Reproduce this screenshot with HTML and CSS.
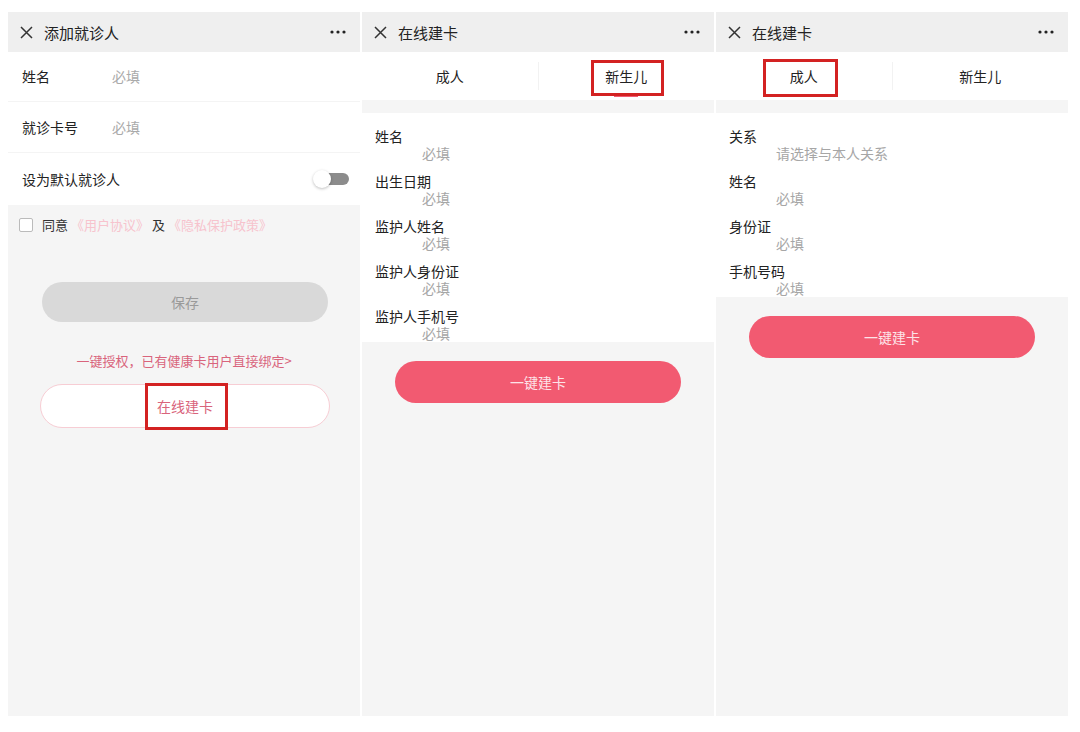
FILE: index.html
```html
<!DOCTYPE html>
<html lang="zh-CN">
<head>
    <meta charset="utf-8">
    <link rel="stylesheet" href="styles.css">
    <title>添加就诊人 / 在线建卡</title>
</head>
<body>
    <div class="screens">

        <!-- screen 1: add patient -->
        <div class="phone">
            <div class="nav">
                <svg class="close" width="13" height="13" viewBox="0 0 13 13"><path d="M1 1L12 12M12 1L1 12" stroke="#333" stroke-width="1.5"/></svg>
                <span class="nav-title">添加就诊人</span>
                <svg class="more" width="16" height="4" viewBox="0 0 16 4"><circle cx="2" cy="2" r="1.6" fill="#222"/><circle cx="8" cy="2" r="1.6" fill="#222"/><circle cx="14" cy="2" r="1.6" fill="#222"/></svg>
            </div>
            <div class="block">
                <div class="row">
                    <span class="row-label">姓名</span>
                    <span class="row-hint">必填</span>
                </div>
                <div class="row">
                    <span class="row-label">就诊卡号</span>
                    <span class="row-hint">必填</span>
                </div>
                <div class="row">
                    <span class="row-label">设为默认就诊人</span>
                    <span class="switch"><span class="knob"></span></span>
                </div>
            </div>
            <div class="agree">
                <span class="checkbox"></span>
                <span>同意</span>
                <span class="policy">《用户协议》</span>
                <span>及</span>
                <span class="policy">《隐私保护政策》</span>
            </div>
            <button class="btn btn-save" type="button">保存</button>
            <p class="bind-link">一键授权，已有健康卡用户直接绑定&gt;</p>
            <button class="btn btn-outline" type="button">在线建卡</button>
            <div class="mark mark-1"></div>
        </div>

        <!-- screen 2: newborn card -->
        <div class="phone">
            <div class="nav">
                <svg class="close" width="13" height="13" viewBox="0 0 13 13"><path d="M1 1L12 12M12 1L1 12" stroke="#333" stroke-width="1.5"/></svg>
                <span class="nav-title">在线建卡</span>
                <svg class="more" width="16" height="4" viewBox="0 0 16 4"><circle cx="2" cy="2" r="1.6" fill="#222"/><circle cx="8" cy="2" r="1.6" fill="#222"/><circle cx="14" cy="2" r="1.6" fill="#222"/></svg>
            </div>
            <div class="tabs">
                <span class="tab">成人</span>
                <span class="tab-split"></span>
                <span class="tab active">新生儿</span>
            </div>
            <div class="form">
                <div class="field"><span class="field-label">姓名</span><span class="field-hint">必填</span></div>
                <div class="field"><span class="field-label">出生日期</span><span class="field-hint">必填</span></div>
                <div class="field"><span class="field-label">监护人姓名</span><span class="field-hint">必填</span></div>
                <div class="field"><span class="field-label">监护人身份证</span><span class="field-hint">必填</span></div>
                <div class="field"><span class="field-label">监护人手机号</span><span class="field-hint">必填</span></div>
            </div>
            <button class="btn btn-pink" type="button">一键建卡</button>
            <div class="mark mark-2"></div>
        </div>

        <!-- screen 3: adult card -->
        <div class="phone">
            <div class="nav">
                <svg class="close" width="13" height="13" viewBox="0 0 13 13"><path d="M1 1L12 12M12 1L1 12" stroke="#333" stroke-width="1.5"/></svg>
                <span class="nav-title">在线建卡</span>
                <svg class="more" width="16" height="4" viewBox="0 0 16 4"><circle cx="2" cy="2" r="1.6" fill="#222"/><circle cx="8" cy="2" r="1.6" fill="#222"/><circle cx="14" cy="2" r="1.6" fill="#222"/></svg>
            </div>
            <div class="tabs">
                <span class="tab active">成人</span>
                <span class="tab-split"></span>
                <span class="tab">新生儿</span>
            </div>
            <div class="form">
                <div class="field"><span class="field-label">关系</span><span class="field-hint">请选择与本人关系</span></div>
                <div class="field"><span class="field-label">姓名</span><span class="field-hint">必填</span></div>
                <div class="field"><span class="field-label">身份证</span><span class="field-hint">必填</span></div>
                <div class="field"><span class="field-label">手机号码</span><span class="field-hint">必填</span></div>
            </div>
            <button class="btn btn-pink" type="button">一键建卡</button>
            <div class="mark mark-3"></div>
        </div>

    </div>
</body>
</html>
```

FILE: styles.css
```css
body {
    margin: 0;
    background: #fff;
    font-family: "Noto Sans CJK SC", "Noto Sans", sans-serif;
    color: #222;
}

.screens {
    display: flex;
    gap: 2px;
    padding: 12px 8px;
}

.phone {
    position: relative;
    width: 352px;
    height: 704px;
    background: #f5f5f5;
    display: flex;
    flex-direction: column;
}

.nav {
    height: 40px;
    background: #efefef;
    display: flex;
    align-items: center;
    padding: 0 14px 0 12px;
}

.close {
    margin-right: 11px;
}

.nav-title {
    font-size: 15px;
    color: #222;
    flex: 1;
}

/* screen 1 */
.block {
    background: #fff;
}

.row {
    height: 51px;
    display: flex;
    align-items: center;
    padding: 0 11px 0 14px;
    border-bottom: 1px solid #f4f4f4;
    box-sizing: border-box;
}

.row:first-child {
    height: 50px;
    padding-bottom: 2px;
}

.row:last-child {
    border-bottom: none;
    height: 52px;
}

.row-label {
    font-size: 14px;
    min-width: 90px;
    white-space: nowrap;
}

.row-hint {
    font-size: 14px;
    color: #aaa;
}

.switch {
    margin-left: auto;
    position: relative;
    width: 34px;
    height: 12px;
    border-radius: 6px;
    background: #8c8c8c;
}

.knob {
    position: absolute;
    left: -2px;
    top: -3px;
    width: 18px;
    height: 18px;
    border-radius: 50%;
    background: #fff;
    box-shadow: 0 1px 3px rgba(0, 0, 0, 0.25);
}

.agree {
    display: flex;
    align-items: center;
    gap: 3px;
    padding: 10px 11px;
    font-size: 13px;
    color: #333;
}

.checkbox {
    width: 12px;
    height: 12px;
    border: 1px solid #bbb;
    border-radius: 2px;
    background: #fff;
    margin-right: 6px;
}

.policy {
    color: #f7c3cd;
}

.btn {
    border: none;
    font-family: inherit;
    font-size: 14px;
    cursor: pointer;
}

.btn-save {
    margin: 38px 0 0 34px;
    width: 286px;
    height: 40px;
    border-radius: 20px;
    background: #d9d9d9;
    color: #9a9a9a;
}

.bind-link {
    margin: 29px 0 0;
    text-align: center;
    font-size: 13px;
    color: #d9647c;
}

.btn-outline {
    margin: 14px 0 0 32px;
    width: 290px;
    height: 44px;
    border-radius: 22px;
    background: #fff;
    border: 1.5px solid #f7cdd4;
    color: #d9647c;
}

/* screens 2 and 3 */
.tabs {
    height: 48px;
    background: #fff;
    display: flex;
    align-items: center;
    margin-bottom: 13px;
}

.tab {
    flex: 1;
    text-align: center;
    font-size: 14px;
    color: #222;
    position: relative;
    line-height: 48px;
}

.tab.active::after {
    content: "";
    position: absolute;
    left: 50%;
    bottom: 3px;
    width: 24px;
    margin-left: -12px;
    height: 2px;
    background: #f15b72;
}

.tab-split {
    width: 1px;
    height: 28px;
    background: #f2f2f2;
}

.form {
    background: #fff;
    padding: 15px 0 0 13px;
    display: flex;
    flex-direction: column;
    gap: 11px;
}

.field {
    display: flex;
    flex-direction: column;
    height: 34px;
}

.field-label {
    font-size: 14px;
    line-height: 17px;
    color: #222;
}

.field-hint {
    font-size: 14px;
    line-height: 17px;
    color: #a6a6a6;
    padding-left: 47px;
}

.btn-pink {
    margin: 19px 0 0 33px;
    width: 286px;
    height: 42px;
    border-radius: 21px;
    background: #f25a71;
    color: #fde3e8;
}

/* red annotation boxes drawn over the screenshots */
.mark {
    position: absolute;
    border: 3px solid #d32222;
    box-sizing: border-box;
}

.mark-1 {
    left: 137px;
    top: 371px;
    width: 83px;
    height: 47px;
}

.mark-2 {
    left: 229px;
    top: 48px;
    width: 73px;
    height: 36px;
}

.mark-3 {
    left: 47px;
    top: 47px;
    width: 75px;
    height: 38px;
}
```
